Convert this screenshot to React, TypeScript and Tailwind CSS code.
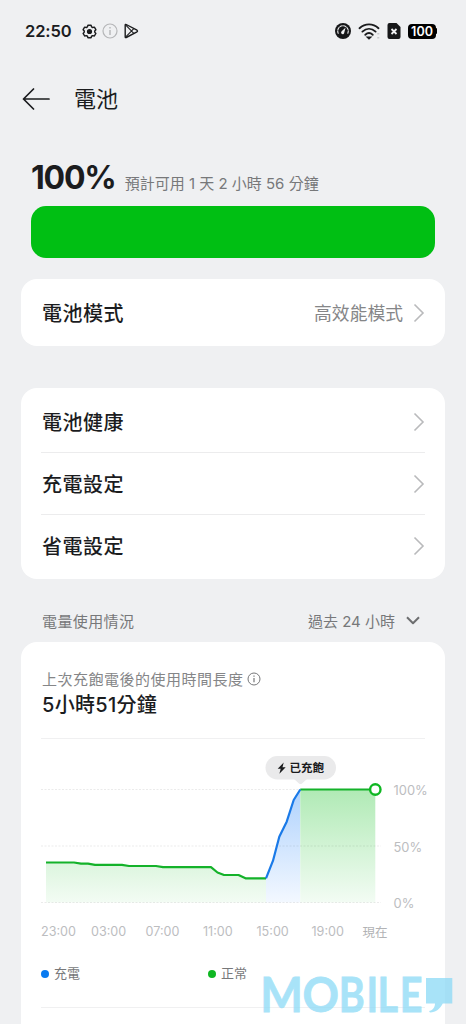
import React, { ReactNode } from 'react';

interface Point {
  x: number;
  y: number;
}

// Chart coordinates are px inside the usage chart svg
const GRID_LINES = [
  { y: 33.5, label: '100%' },
  { y: 90, label: '50%' },
  { y: 146.5, label: '0%' },
];

const BASELINE = 146.5;

const DISCHARGE: Point[] = [
  { x: 5, y: 106.5 }, { x: 33, y: 106.5 }, { x: 40, y: 107.7 }, { x: 47, y: 107.7 },
  { x: 54, y: 108.8 }, { x: 81, y: 108.8 }, { x: 88, y: 110 }, { x: 115, y: 110 },
  { x: 122, y: 111.2 }, { x: 170, y: 111.2 }, { x: 176.5, y: 116.5 }, { x: 183, y: 119 },
  { x: 197.5, y: 119 }, { x: 204.5, y: 122.3 }, { x: 225, y: 122.3 },
];

const CHARGE: Point[] = [
  { x: 225, y: 122.3 }, { x: 232, y: 104.7 }, { x: 238.3, y: 80.7 },
  { x: 245.7, y: 65.7 }, { x: 252.7, y: 44 }, { x: 259.3, y: 33.5 },
];

const FULL: Point[] = [
  { x: 259.3, y: 33.5 }, { x: 334.3, y: 33.5 },
];

const TIMES = [
  { x: 0, label: '23:00' },
  { x: 50, label: '03:00' },
  { x: 104.5, label: '07:00' },
  { x: 162, label: '11:00' },
  { x: 215.5, label: '15:00' },
  { x: 270.5, label: '19:00' },
];

const toLine = (points: Point[]) => points.map((p) => `${p.x},${p.y}`).join(' ');

const toArea = (points: Point[]) =>
  `${points[0].x},${BASELINE} ${toLine(points)} ${points[points.length - 1].x},${BASELINE}`;

function StatusBar() {
  return (
    <div className="flex h-[62px] items-center justify-between pl-[25px] pr-[29px]">
      <div className="flex items-center">
        <span className="w-[57px] text-[16.5px] font-semibold leading-none tracking-[-0.1px]">22:50</span>
        <svg width="15" height="15" viewBox="0 0 24 24" fill="none" stroke="#1b1c1e" strokeWidth="2.3" strokeLinejoin="round">
          <path d="M9.5 2h5l.8 2.6 1.8 1 2.7-.6 2.4 4.1-1.8 2.1v1.8l1.8 2.1-2.4 4.1-2.7-.6-1.8 1-.8 2.4h-5l-.8-2.4-1.8-1-2.7.6-2.4-4.1 1.8-2.1v-1.8L1.8 9.100 4.2 5l2.7.6 1.8-1z" />
          <circle cx="12" cy="12" r="3" fill="#1b1c1e" />
        </svg>
        <svg className="ml-[5px]" width="16" height="16" viewBox="0 0 16 16" fill="none" stroke="#b5b6b8" strokeWidth="1.2">
          <circle cx="8" cy="8" r="7" />
          <path d="M8 6.9v5M8 4v1.5" strokeWidth="1.4" />
        </svg>
        <svg className="ml-[6px]" width="15" height="16" viewBox="0 0 15 16" fill="none" stroke="#1b1c1e" strokeLinejoin="round">
          <path d="M1.2 2v12q0 1 1 .5L13 8.800q1-.8 0-1.600L2.200 1.500q-1-.5-1 .5z" strokeWidth="1.4" />
          <path d="M1.800 2.200 9.800 10.300M1.800 13.800l8-8.100" strokeWidth="1.1" />
        </svg>
      </div>
      <div className="flex items-center">
        <svg width="16" height="16" viewBox="0 0 16 16" fill="none">
          <circle cx="8" cy="8" r="8" fill="#161719" />
          <path d="M3.4 10.7A5.3 5.3 0 1 1 12.6 10.7" stroke="#eff0f2" strokeWidth="1.1" strokeDasharray="3.3 .4" />
          <path d="M10.6 4.5 9.3 9.5A1.6 1.6 0 1 1 6.7 8.3z" fill="#eff0f2" />
        </svg>
        <svg className="ml-[7px]" width="22" height="17" viewBox="0 0 22 17" fill="none" stroke="#1b1c1e" strokeWidth="1.9" strokeLinecap="round">
          <path d="M1.5 5.2C7 .1 15 .1 20.5 5.2M4.4 8.6c4-3.6 9.2-3.6 13.2 0M7.3 11.8c2.2-2 5.2-2 7.4 0" />
          <path d="M10 14.5h2L11 15.4z" />
          <path d="M20.3 10v1.5M20.3 14v1.5" stroke="#c9cacc" strokeWidth="2" strokeLinecap="butt" />
        </svg>
        <svg className="ml-[7px]" width="14" height="16" viewBox="0 0 14 16">
          <path d="M2.5 0h7L13.5 4v10a2 2 0 0 1-2 2h-9a2 2 0 0 1-2-2V2a2 2 0 0 1 2-2z" fill="#161719" />
          <path d="M4.5 6l5 5M9.5 6l-5 5" stroke="#eff0f2" strokeWidth="1.8" />
        </svg>
        <div className="ml-[7px] flex h-[15px] w-[28px] items-center justify-center rounded-[4px] bg-black pt-px text-[12.5px] font-semibold leading-[14px] text-white">
          100
        </div>
        <div className="h-[6px] w-px rounded-r bg-black" />
      </div>
    </div>
  );
}

function Chevron() {
  return (
    <svg width="12" height="20" viewBox="0 0 12 20" fill="none" stroke="#b9babc" strokeWidth="1.6">
      <path d="M1.5 1.5 10 10l-8.5 8.5" />
    </svg>
  );
}

function Card({ children, className = '' }: { children: ReactNode; className?: string }) {
  return <section className={`mx-[21px] rounded-[16px] bg-white px-5 ${className}`}>{children}</section>;
}

function Row({ label, value, divider }: { label: string; value?: string; divider?: boolean }) {
  return (
    <div className={`flex h-[62px] items-center justify-between pl-px ${divider ? 'border-b border-[#ececed]' : ''}`}>
      <span className="pt-[2px] text-[20px] font-medium tracking-[0.5px] text-[#1b1c1e]">{label}</span>
      <span className="flex items-center gap-[10px] text-[17.8px] text-[#858688]">
        {value && <span className="pt-[2px]">{value}</span>}
        <Chevron />
      </span>
    </div>
  );
}

function UsageChart() {
  return (
    <svg className="block overflow-visible" width="384" height="187" viewBox="0 0 384 187">
      <defs>
        <linearGradient id="green-full" x1="0" y1="0" x2="0" y2="1">
          <stop offset="0" stopColor="#b0eab5" />
          <stop offset="1" stopColor="#f3fcf4" />
        </linearGradient>
        <linearGradient id="green-low" x1="0" y1="0" x2="0" y2="1">
          <stop offset="0" stopColor="#dcf5de" />
          <stop offset="1" stopColor="#f3fcf4" />
        </linearGradient>
        <linearGradient id="blue" x1="0" y1="0" x2="0" y2="1">
          <stop offset="0" stopColor="#afd2fd" />
          <stop offset="1" stopColor="#f3f8ff" />
        </linearGradient>
      </defs>

      <polygon points={toArea(DISCHARGE)} fill="url(#green-low)" />
      <polygon points={toArea(CHARGE)} fill="url(#blue)" />
      <polygon points={toArea(FULL)} fill="url(#green-full)" />

      {GRID_LINES.map((line) => (
        <g key={line.label}>
          <line x1="0" x2="340" y1={line.y} y2={line.y} stroke="#000" strokeOpacity="0.08" strokeDasharray="2 1.5" />
          <text x="352.5" y={line.y + 5.5} fontSize="12.9" fill="#bcbdbf">{line.label}</text>
        </g>
      ))}

      <g fill="none" strokeWidth="2.2" strokeLinejoin="round">
        <polyline points={toLine(DISCHARGE)} stroke="#14b22a" />
        <polyline points={toLine(FULL)} stroke="#14b22a" />
        <polyline points={toLine(CHARGE)} stroke="#1a7ae8" />
      </g>
      <circle cx="334.3" cy="33.5" r="5.2" fill="#fff" stroke="#0fb722" strokeWidth="2.4" />

      <rect x="224.5" y="0" width="70.5" height="23.5" rx="11.75" fill="#eaeaeb" />
      <path d="M253 23h13l-5 4.5q-1.5 1-3 0z" fill="#eaeaeb" />
      <path d="M242.7 6.5l-6 6.2h3l-1.3 5 6.3-6.5h-3.2z" fill="#1b1c1e" />
      <text x="248.5" y="16.3" fontSize="11.5" fontWeight="700" fill="#1b1c1e">已充飽</text>

      {TIMES.map((time) => (
        <text key={time.label} x={time.x} y="180" fontSize="12.6" fill="#bcbdbf">{time.label}</text>
      ))}
      <text x="321.5" y="180.5" fontSize="12.5" fill="#b2b3b5">現在</text>
    </svg>
  );
}

function Watermark() {
  return (
    <div className="absolute left-[256px] top-[970px]">
      <svg className="overflow-visible" width="200" height="50" viewBox="0 0 200 50" fill="#8cdaf6" opacity="0.75">
        <g fontSize="47" fontWeight="700" stroke="#8cdaf6" strokeWidth="0.8" className="font-[Lato,sans-serif]">
          <text x="4.5 48.5" y="41.8" transform="scale(0.96 1)">MO</text>
          <text x="98.5 131.5 144.5 171" y="41.8" transform="scale(0.84 1)">BILE</text>
        </g>
        <path d="M170 8h26.3v25.5h-9.5c-2.5 5-7 9-12.8 9l-1-1.5c3.5-.5 6-3.5 6-7.5h-9z" />
      </svg>
    </div>
  );
}

export default function App() {
  return (
    <div className="relative h-[1024px] w-[466px] overflow-hidden bg-[#eff0f2] font-[Inter,'Noto_Sans_CJK_TC',sans-serif] text-[#1b1c1e]">
      <StatusBar />

      <header className="flex h-[73px] items-center gap-6 pl-[22px]">
        <svg width="28" height="22" viewBox="0 0 28 22" fill="none" stroke="#1b1c1e" strokeWidth="1.7" strokeLinecap="round" strokeLinejoin="round">
          <path d="M11.5 1 1.5 11l10 10M1.5 11H27" />
        </svg>
        <h1 className="pt-[2px] text-[22px]">電池</h1>
      </header>

      <div className="flex h-[71px] items-baseline gap-[9px] pl-[31px] pt-[23px]">
        <span className="text-[32px] font-bold leading-[40px] tracking-[-1.2px]">100%</span>
        <span className="text-[15px] leading-5 text-[#77787a]">預計可用 1 天 2 小時 56 分鐘</span>
      </div>
      <div className="mx-[31px] h-[52px] rounded-[15px] bg-[#00bf13]" />

      <Card className="mt-[21px] pb-[2px] pt-[3px]">
        <Row label="電池模式" value="高效能模式" />
      </Card>

      <Card className="mt-[42px] pb-[2px] pt-[3px]">
        <Row label="電池健康" divider />
        <Row label="充電設定" divider />
        <Row label="省電設定" />
      </Card>

      <div className="flex h-[63px] items-center justify-between pl-[42px] pr-[46px] pt-[24px] text-[15px] text-[#77787a]">
        <span className="tracking-[0.4px]">電量使用情況</span>
        <span className="flex items-center gap-[11px]">
          過去 24 小時
          <svg className="-mt-1" width="14" height="9" viewBox="0 0 14 9" fill="none" stroke="#6d6e70" strokeWidth="2" strokeLinejoin="round">
            <path d="M1 1.2l6 6 6-6" />
          </svg>
        </span>
      </div>

      <Card className="h-[420px]">
        <div className="flex h-[97px] flex-col justify-center border-b border-[#f0f0f1] pl-px pt-1">
          <div className="flex items-center gap-[3px] text-[15px] leading-[25px] tracking-[0.5px] text-[#858688]">
            上次充飽電後的使用時間長度
            <svg width="14" height="14" viewBox="0 0 14 14" fill="none" stroke="#77787a">
              <circle cx="7" cy="7" r="6" />
              <path d="M7 6v4.2M7 3.5v1.3" strokeWidth="1.2" />
            </svg>
          </div>
          <div className="text-[20px] font-medium leading-[26px] tracking-[0.3px]">5小時51分鐘</div>
        </div>

        <div className="pt-[17px]">
          <UsageChart />
        </div>

        <div className="flex h-[65px] items-center border-b border-[#f0f0f1] pb-[2px] text-[13px] text-[#77787a]">
          <div className="flex w-[167px] items-center gap-[5px]">
            <i className="h-2 w-2 rounded-full bg-[#087af0]" />
            充電
          </div>
          <div className="flex items-center gap-[5px]">
            <i className="h-2 w-2 rounded-full bg-[#0fb722]" />
            正常
          </div>
        </div>
      </Card>

      <Watermark />
    </div>
  );
}
